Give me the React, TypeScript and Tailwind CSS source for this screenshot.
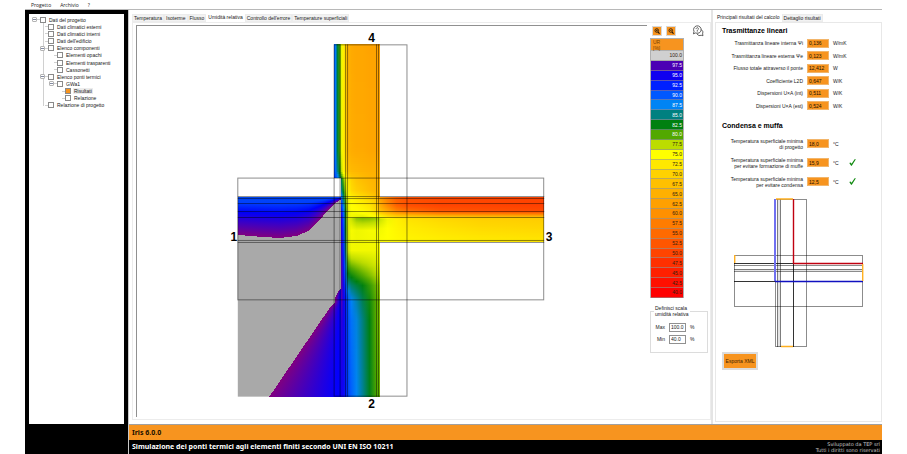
import { useState } from "react";
import type { ReactNode } from "react";

const scale = [
  { v: 100, c: "#d0d0d0", dark: true },
  { v: 97.5, c: "#4b00b4" },
  { v: 95, c: "#1000f0" },
  { v: 92.5, c: "#0020ff" },
  { v: 90, c: "#0058ff" },
  { v: 87.5, c: "#0084f4" },
  { v: 85, c: "#008080" },
  { v: 82.5, c: "#008010" },
  { v: 80, c: "#52a800" },
  { v: 77.5, c: "#bcdc00", dark: true },
  { v: 75, c: "#ffff00", dark: true },
  { v: 72.5, c: "#ffe800", dark: true },
  { v: 70, c: "#ffd200", dark: true },
  { v: 67.5, c: "#ffc000", dark: true },
  { v: 65, c: "#ffb000", dark: true },
  { v: 62.5, c: "#ffa000", dark: true },
  { v: 60, c: "#ff9000", dark: true },
  { v: 57.5, c: "#ff7c00", dark: true },
  { v: 55, c: "#ff6a00", dark: true },
  { v: 52.5, c: "#ff5600", dark: true },
  { v: 50, c: "#ff4400", dark: true },
  { v: 47.5, c: "#ff3000", dark: true },
  { v: 45, c: "#ff2000", dark: true },
  { v: 42.5, c: "#ff1000", dark: true },
  { v: 40, c: "#ff0000", dark: true },
];

const rgb = (hex: string) => [1, 3, 5].map((i) => parseInt(hex.slice(i, i + 2), 16));
const ramp = scale.map((s, i) => (i === 0 ? rgb("#800080") : rgb(s.c)));

// relative humidity -> colour
function colorOf(v: number) {
  const t = Math.min(Math.max((100 - v) / 2.5, 0), ramp.length - 1.001);
  const i = Math.floor(t);
  const m = ramp[i].map((c, k) => Math.round(c + (ramp[i + 1][k] - c) * (t - i)));
  return `rgb(${m.join(",")})`;
}

function interp(points: number[][], x: number) {
  if (x <= points[0][0]) return points[0][1];
  for (let i = 1; i < points.length; i++) {
    const [x1, y1] = points[i];
    const [x0, y0] = points[i - 1];
    if (x <= x1) return y0 + ((y1 - y0) * (x - x0)) / (x1 - x0);
  }
  return points[points.length - 1][1];
}

type Profile = { y: number; v: number[] };

const wallX = [334, 336, 338, 340, 342, 344, 346, 348, 352, 357, 363, 370, 376, 380];
const wallTop: Profile[] = [
  { y: 44, v: [90, 88, 83, 80.5, 75.5, 73, 70, 66, 64, 63.5, 63.5, 63, 63, 62.5] },
  { y: 150, v: [90, 88, 83, 80.5, 75.5, 73, 70, 66, 64.5, 64, 64, 63.5, 63.5, 63] },
  { y: 170, v: [91, 89, 85, 82, 77, 74, 71, 68, 66.5, 66, 65.5, 65, 65, 64.5] },
  { y: 178, v: [92, 91, 89, 86, 82, 78, 75, 72, 69, 68, 67, 66, 65.5, 65] },
];

const coreX = [341, 342, 344, 346, 348, 352, 357, 363, 370, 376, 380];
const core: Profile[] = [
  { y: 178, v: [88, 83, 79, 75.5, 73, 70, 68, 67, 66, 65.5, 65] },
  { y: 190, v: [90, 85, 82, 77.5, 74.5, 71, 69.5, 68.5, 67, 66, 65.5] },
  { y: 200, v: [95, 90, 85, 80, 75.5, 74.5, 73.5, 72.5, 71, 69, 64] },
  { y: 211, v: [98, 93, 89, 82, 76, 75.2, 75, 74.5, 73.5, 71, 68] },
  { y: 216, v: [99, 95, 90, 83, 76, 75.5, 75.8, 76, 75.5, 75, 74] },
  { y: 218, v: [99, 95, 90, 83, 76, 77, 78.6, 79, 78.8, 78.4, 77.5] },
  { y: 230, v: [99, 95, 91, 83, 76.5, 75.3, 75.6, 75.5, 75.3, 75.3, 75.3] },
  { y: 250, v: [99, 96, 92, 85, 77, 75.5, 75.5, 75.5, 75.5, 75.5, 75.5] },
  { y: 262, v: [99.5, 97, 93, 87, 80, 78.5, 78, 77.5, 77, 76.5, 76] },
  { y: 275, v: [99.8, 97.5, 94, 89, 83, 82, 81, 80, 79, 78, 77.5] },
  { y: 285, v: [100, 97.5, 94.5, 91, 86, 84.5, 83.5, 82.5, 81, 79.5, 78.5] },
  { y: 300, v: [99, 97.5, 95, 93, 90, 87.5, 86, 84, 82, 80, 79] },
  { y: 320, v: [97, 96, 95, 93, 90.5, 88.5, 87, 85, 82.5, 80, 79] },
  { y: 397, v: [95, 95, 94.5, 93, 91, 89.5, 87.5, 85.5, 82.8, 80.5, 79.5] },
];

const slabX = [380, 388, 397, 408, 440, 480, 545];
const slab: Profile[] = [
  { y: 197, v: [63, 58, 54, 52, 51, 50.5, 50] },
  { y: 205, v: [65, 59, 54, 51.5, 50, 50, 49.5] },
  { y: 211, v: [68, 64, 59, 56, 53, 52, 51] },
  { y: 214, v: [72, 69, 66, 64, 61, 60, 59] },
  { y: 217, v: [76, 73, 71.5, 71, 70, 69, 68.5] },
  { y: 219, v: [77, 75.5, 73.5, 72, 70.8, 69.8, 69.3] },
  { y: 228, v: [75.5, 75, 74, 73, 72, 71, 70.5] },
  { y: 242, v: [75, 75, 74.5, 74, 73.5, 73, 72.5] },
];

// limits of the saturated (grey) area
const upperLimit = [[238, 235], [262, 237], [280, 238], [296, 236], [308, 231], [318, 221], [327, 211], [335, 203], [341, 199]];
const lowerLimit = [[288, 341], [292, 338], [296, 336], [302, 335], [309, 329], [397, 269]];

function Field({ id, xs, rows, step }: { id: string; xs: number[]; rows: Profile[]; step: number }) {
  const x0 = xs[0];
  const w = xs[xs.length - 1] - x0;
  const top = rows[0].y;
  const bottom = rows[rows.length - 1].y;
  const ys: number[] = [];
  for (let y = top; y < bottom; y += step) ys.push(y);
  return (
    <g shapeRendering="crispEdges">
      {ys.map((y) => (
        <g key={y}>
          <linearGradient id={`${id}${y}`}>
            {xs.map((x, i) => (
              <stop key={x} offset={(x - x0) / w} stopColor={colorOf(interp(rows.map((r) => [r.y, r.v[i]]), y))} />
            ))}
          </linearGradient>
          <rect x={x0} y={y} width={w} height={Math.min(step, bottom - y)} fill={`url(#${id}${y})`} />
        </g>
      ))}
    </g>
  );
}

function HumidityMap() {
  const cols = Array.from({ length: 103 }, (_, i) => 238 + i);
  const rows = Array.from({ length: 109 }, (_, i) => 288 + i);
  return (
    <svg viewBox="137 26 511 391" className="block h-full w-full" role="img" aria-label="Umidità relativa">
      <defs>
        <linearGradient id="upper" x2="0" y2="1">
          <stop offset="0" stopColor="#0048f0" />
          <stop offset="0.15" stopColor="#0040ff" />
          <stop offset="0.4" stopColor="#0000f8" />
          <stop offset="0.65" stopColor="#3800c8" />
          <stop offset="1" stopColor="#800080" />
        </linearGradient>
        <linearGradient id="lower">
          <stop offset="0" stopColor="#800080" />
          <stop offset="0.9" stopColor="#0800f8" />
          <stop offset="1" stopColor="#0000ff" />
        </linearGradient>
      </defs>
      <rect x="238" y="197" width="103" height="200" fill="#a9a9a9" />
      <g shapeRendering="crispEdges">
        {cols.map((x) => (
          <rect key={x} x={x} y="197" width="1" height={interp(upperLimit, x) - 197} fill="url(#upper)" />
        ))}
        {rows.map((y) => {
          const x = interp(lowerLimit, y);
          return <rect key={y} x={x} y={y} width={Math.max(341 - x, 1)} height="1" fill="url(#lower)" />;
        })}
      </g>
      <Field id="t" xs={wallX} rows={wallTop} step={2} />
      <Field id="c" xs={coreX} rows={core} step={1} />
      <Field id="s" xs={slabX} rows={slab} step={1} />
      <g fill="none" stroke="#000" strokeOpacity="0.45">
        <rect x="334.5" y="44.5" width="73" height="352" />
        <rect x="238" y="178" width="306.5" height="122" />
        <path d="M340.5 44V397M346 44V397M348 44V397M377 44V397M379 44V397" />
        <path d="M238 196.5H545M238 198.5H545M238 203.5H545M238 211.5H545M238 217.5H545M238 240.5H545M238 242.5H545" />
      </g>
      <g className="font-['Liberation_Sans',sans-serif] text-[12px] font-bold" textAnchor="middle">
        <text x="234" y="241">1</text>
        <text x="372" y="408">2</text>
        <text x="550" y="241">3</text>
        <text x="372" y="42">4</text>
      </g>
    </svg>
  );
}

function JunctionScheme() {
  return (
    <svg viewBox="734 197 130 151" className="block w-full" role="img" aria-label="Schema del nodo">
      <rect x="777" y="199" width="4" height="148" fill="#e4e4e4" />
      <rect x="735" y="269" width="128" height="2" fill="#e4e4e4" />
      <g fill="none" stroke="#000" strokeOpacity="0.45">
        <rect x="775.5" y="199.5" width="31" height="147" />
        <rect x="734.5" y="255.5" width="128" height="51" />
        <path d="M777.5 199V347M780.5 199V347M734 265.5H863M734 269.5H863M734 271.5H863" />
        <path strokeOpacity="0.8" d="M793.5 263V347M734 263.5H794M734 281.5H776" />
      </g>
      <g fill="none">
        <path stroke="#7070f0" strokeWidth="2" d="M775 199V281" />
        <path stroke="#1010c0" strokeWidth="1.4" d="M775 281.5H863" />
        <path stroke="#c00010" strokeWidth="1.4" d="M793.5 199V263.5H863" />
        <path stroke="#ffb020" strokeWidth="1.4" d="M776 199H793M734.7 255V263M862.7 264V281M781 346.5H793" />
      </g>
    </svg>
  );
}

type Node = { label: string; level: number; open?: boolean; on?: boolean };

const tree: Node[] = [
  { label: "Dati del progetto", level: 0, open: true },
  { label: "Dati climatici esterni", level: 1 },
  { label: "Dati climatici interni", level: 1 },
  { label: "Dati dell'edificio", level: 1 },
  { label: "Elenco componenti", level: 1, open: true },
  { label: "Elementi opachi", level: 2 },
  { label: "Elementi trasparenti", level: 2 },
  { label: "Cassonetti", level: 2 },
  { label: "Elenco ponti termici", level: 1, open: true },
  { label: "GWa1", level: 2, open: true },
  { label: "Risultati", level: 3, on: true },
  { label: "Relazione", level: 3 },
  { label: "Relazione di progetto", level: 1 },
];

const indent = ["pl-[3px]", "pl-[11px]", "pl-[20px]", "pl-[28px]"];

function ProjectTree() {
  return (
    <ul className="flex h-[93px] flex-col bg-[linear-gradient(#d0d0d0,#d0d0d0)] bg-[length:1px_84px] bg-[position:14px_6px] bg-no-repeat">
      {tree.map((n) => (
        <li key={n.label} className={`flex flex-1 items-center ${indent[n.level]}`}>
          {n.open ? (
            <button aria-label={`Comprimi ${n.label}`} className="flex size-[5px] shrink-0 items-center justify-center rounded-[1px] border border-[#b4b4b4] bg-white">
              <span className="h-px w-[3px] bg-[#8088a0]" />
            </button>
          ) : (
            <span className="w-[5px] shrink-0" />
          )}
          <span className="h-px w-[3px] shrink-0 bg-[#d0d0d0]" />
          <label className="flex items-center gap-[2px] whitespace-nowrap">
            <input type="checkbox" defaultChecked={n.on} className="size-[6px] appearance-none border border-[#8a8a8a] bg-white checked:bg-[#f7941f]" />
            <span className={n.on ? "bg-[#ececec] px-px" : "px-px"}>{n.label}</span>
          </label>
        </li>
      ))}
    </ul>
  );
}

function Tabs({ items, active, onPick }: { items: string[]; active: string; onPick: (s: string) => void }) {
  return (
    <div role="tablist" className="flex h-[10px] items-end">
      {items.map((t) => (
        <button
          key={t}
          role="tab"
          aria-selected={t === active}
          onClick={() => onPick(t)}
          className={`whitespace-nowrap border px-px ${t === active ? "h-[10px] border-transparent bg-white" : "h-[8px] border-[#ececec] bg-[#f2f2f2]"}`}
        >
          {t}
        </button>
      ))}
    </div>
  );
}

function ZoomButton({ label, plus }: { label: string; plus?: boolean }) {
  return (
    <button aria-label={label} className="size-[10px] border border-[#d8d8d8] bg-[#f7941f] p-px">
      <svg viewBox="0 0 12 12" className="block size-full" fill="none" stroke="#1c1206">
        <circle cx="5.5" cy="5" r="3.6" strokeWidth="1.6" />
        <path d="M8 8l3 3.4" strokeWidth="2.2" />
        <path d={plus ? "M3.6 5h3.8M5.5 3.1v3.8" : "M3.6 5h3.8"} strokeWidth="1.2" />
      </svg>
    </button>
  );
}

function HelpIcon() {
  return (
    <svg viewBox="0 0 24 24" className="block size-full" fill="none" stroke="#505050" strokeWidth="1.8" strokeLinejoin="round" strokeLinecap="round">
      <path d="M3 17l1-4.2A7.6 7.6 0 1 1 7.6 16.2z" />
      <path d="M8.2 7.4a2.3 2.3 0 1 1 3.4 2.2c-.8.5-1 .9-1 1.7M10.6 13.6v.2" />
      <path d="M18.6 9.4a6 6 0 0 1 2.6 8.4l.8 3.6-3.6-.8a6.2 6.2 0 0 1-8-2" />
    </svg>
  );
}

function Limit({ label, value }: { label: string; value: string }) {
  return (
    <label className="flex h-[12px] items-center gap-[4px]">
      <span className="w-[11px] text-right">{label}</span>
      <input defaultValue={value} className="h-[9px] w-[17px] border border-[#909090] bg-white pl-px" />
      <span>%</span>
    </label>
  );
}

function Result({ label, value, unit, ok }: { label: ReactNode; value: string; unit: string; ok?: boolean }) {
  return (
    <label className="flex flex-1 items-center">
      <span className="w-[81px] whitespace-nowrap text-right leading-[6px]">{label}</span>
      <input readOnly value={value} className="ml-[4px] h-[9px] w-[22px] border border-[#f2b56a] bg-[#f7941f] pl-px text-[#201000]" />
      <span className="ml-[4px] w-[16px]">{unit}</span>
      {ok && (
        <svg viewBox="0 0 12 12" className="size-[7px]" role="img" aria-label="Verificato">
          <path d="M0.5 7l2.2-1.2L4.4 8 9.6.6h2.2L4.8 11.6H3.6z" fill="#108a10" />
        </svg>
      )}
    </label>
  );
}

export default function App() {
  const [view, setView] = useState("Umidità relativa");
  const [panel, setPanel] = useState("Principali risultati del calcolo");

  return (
    <div className="flex min-h-screen flex-col bg-white px-[25px] font-['Liberation_Sans',sans-serif] text-[5px] leading-[6px] text-[#202020]">
      <nav className="flex h-[9px] gap-[9px] pl-[6px] font-['Open_Sans',sans-serif]">
        <button>Progetto</button>
        <button>Archivio</button>
        <button>?</button>
      </nav>

      <div className="flex flex-1 border-t border-[#b8b8b8]">
        <aside className="flex w-[103px] shrink-0 flex-col bg-black px-[4px] pb-[30px] pt-[4px]">
          <div className="flex-1 bg-white pt-[2px]">
            <ProjectTree />
          </div>
        </aside>

        <div className="flex min-w-0 flex-1 flex-col border-l border-[#c8c8c8]">
          <main className="flex flex-1 border-b border-[#a0a0a0]">
            <section className="flex min-w-0 flex-1 flex-col pl-[3px] pt-[2px]">
              <Tabs
                items={["Temperatura", "Isoterme", "Flusso", "Umidità relativa", "Controllo dell'errore", "Temperature superficiali"]}
                active={view}
                onPick={setView}
              />
              <div className="mb-[4px] flex flex-1 gap-[3px] border border-[#ececec] pb-[2px] pl-[3px] pt-[2px]">
                <div className="min-w-0 flex-1 border-l border-t border-[#909090]">
                  <HumidityMap />
                </div>
                <div className="w-[60px] shrink-0">
                  <div className="flex items-center gap-[4px] pl-[2px]">
                    <ZoomButton label="Ingrandisci" plus />
                    <ZoomButton label="Riduci" />
                    <button aria-label="Aiuto" className="ml-auto mr-[6px] size-[12px]">
                      <HelpIcon />
                    </button>
                  </div>
                  <div className="mt-px w-[34px] border-x border-[#b0b0b0]">
                    <div className="h-[13px] border-y border-[#b0b0b0] bg-[#f7941f] pl-[2px] leading-[6px] text-[#7a4000]">
                      UR
                      <br />
                      [%]
                    </div>
                    <ul className="flex h-[247px] flex-col text-right">
                      {scale.map((s) => (
                        <li
                          key={s.v}
                          className={`flex flex-1 items-center justify-end border-b border-[#909090]/60 pr-px ${s.dark ? "text-[#302010]" : "text-white"}`}
                          style={{ background: s.c }}
                        >
                          {s.v.toFixed(1)}
                        </li>
                      ))}
                    </ul>
                  </div>
                  <fieldset className="mr-[2px] mt-[7px] border border-[#dcdcdc] pb-[7px] pl-[3px]">
                    <legend className="px-px">
                      Definisci scala
                      <br />
                      umidità relativa
                    </legend>
                    <div className="pt-[4px]">
                      <Limit label="Max" value="100.0" />
                      <Limit label="Min" value="40.0" />
                    </div>
                  </fieldset>
                </div>
              </div>
            </section>

            <section className="flex w-[171px] shrink-0 flex-col border-l-2 border-[#e4e4e4] pl-[2px] pt-[2px]">
              <Tabs items={["Principali risultati del calcolo", "Dettaglio risultati"]} active={panel} onPick={setPanel} />
              <div className="mb-[2px] flex-1 border border-[#e8e8e8] pl-[6px] pt-[4px]">
                <h2 className="text-[7px] font-bold leading-[8px] text-black">Trasmittanze lineari</h2>
                <div className="mt-[2px] flex h-[75px] flex-col">
                  <Result label="Trasmittanza lineare interna Ψi" value="0,136" unit="W/mK" />
                  <Result label="Trasmittanza lineare esterna Ψe" value="0,123" unit="W/mK" />
                  <Result label="Flusso totale attraverso il ponte" value="12,412" unit="W" />
                  <Result label="Coefficiente L2D" value="0,647" unit="W/K" />
                  <Result label="Dispersioni U×A (int)" value="0,511" unit="W/K" />
                  <Result label="Dispersioni U×A (est)" value="0,524" unit="W/K" />
                </div>
                <h2 className="mt-[10px] text-[7px] font-bold leading-[8px] text-black">Condensa e muffa</h2>
                <div className="mt-[4px] flex h-[57px] flex-col">
                  <Result label={<>Temperatura superficiale minima<br />di progetto</>} value="18,0" unit="°C" />
                  <Result label={<>Temperatura superficiale minima<br />per evitare formazione di muffe</>} value="15,9" unit="°C" ok />
                  <Result label={<>Temperatura superficiale minima<br />per evitare condensa</>} value="12,5" unit="°C" ok />
                </div>
                <div className="ml-[12px] mr-[17px] mt-[6px]">
                  <JunctionScheme />
                </div>
                <button className="mt-[4px] h-[18px] w-[36px] border-2 border-[#dcdcdc] bg-[#f7941f] text-[#402000]">Esporta XML</button>
              </div>
            </section>
          </main>

          <footer className="font-['Noto_Sans',sans-serif]">
            <p className="h-[15px] bg-[#f7941f] pl-[3px] text-[7px] font-bold leading-[15px] text-[#201000]">Iris 6.0.0</p>
            <div className="flex h-[14px] items-center justify-between bg-black pl-[3px] pr-[2px] text-white">
              <p className="text-[7px] font-bold">Simulazione dei ponti termici agli elementi finiti secondo UNI EN ISO 10211</p>
              <p className="text-right font-['DejaVu_Sans',sans-serif] text-[#c8c8c8]">
                Sviluppato da TEP srl
                <br />
                Tutti i diritti sono riservati
              </p>
            </div>
          </footer>
        </div>
      </div>
    </div>
  );
}
